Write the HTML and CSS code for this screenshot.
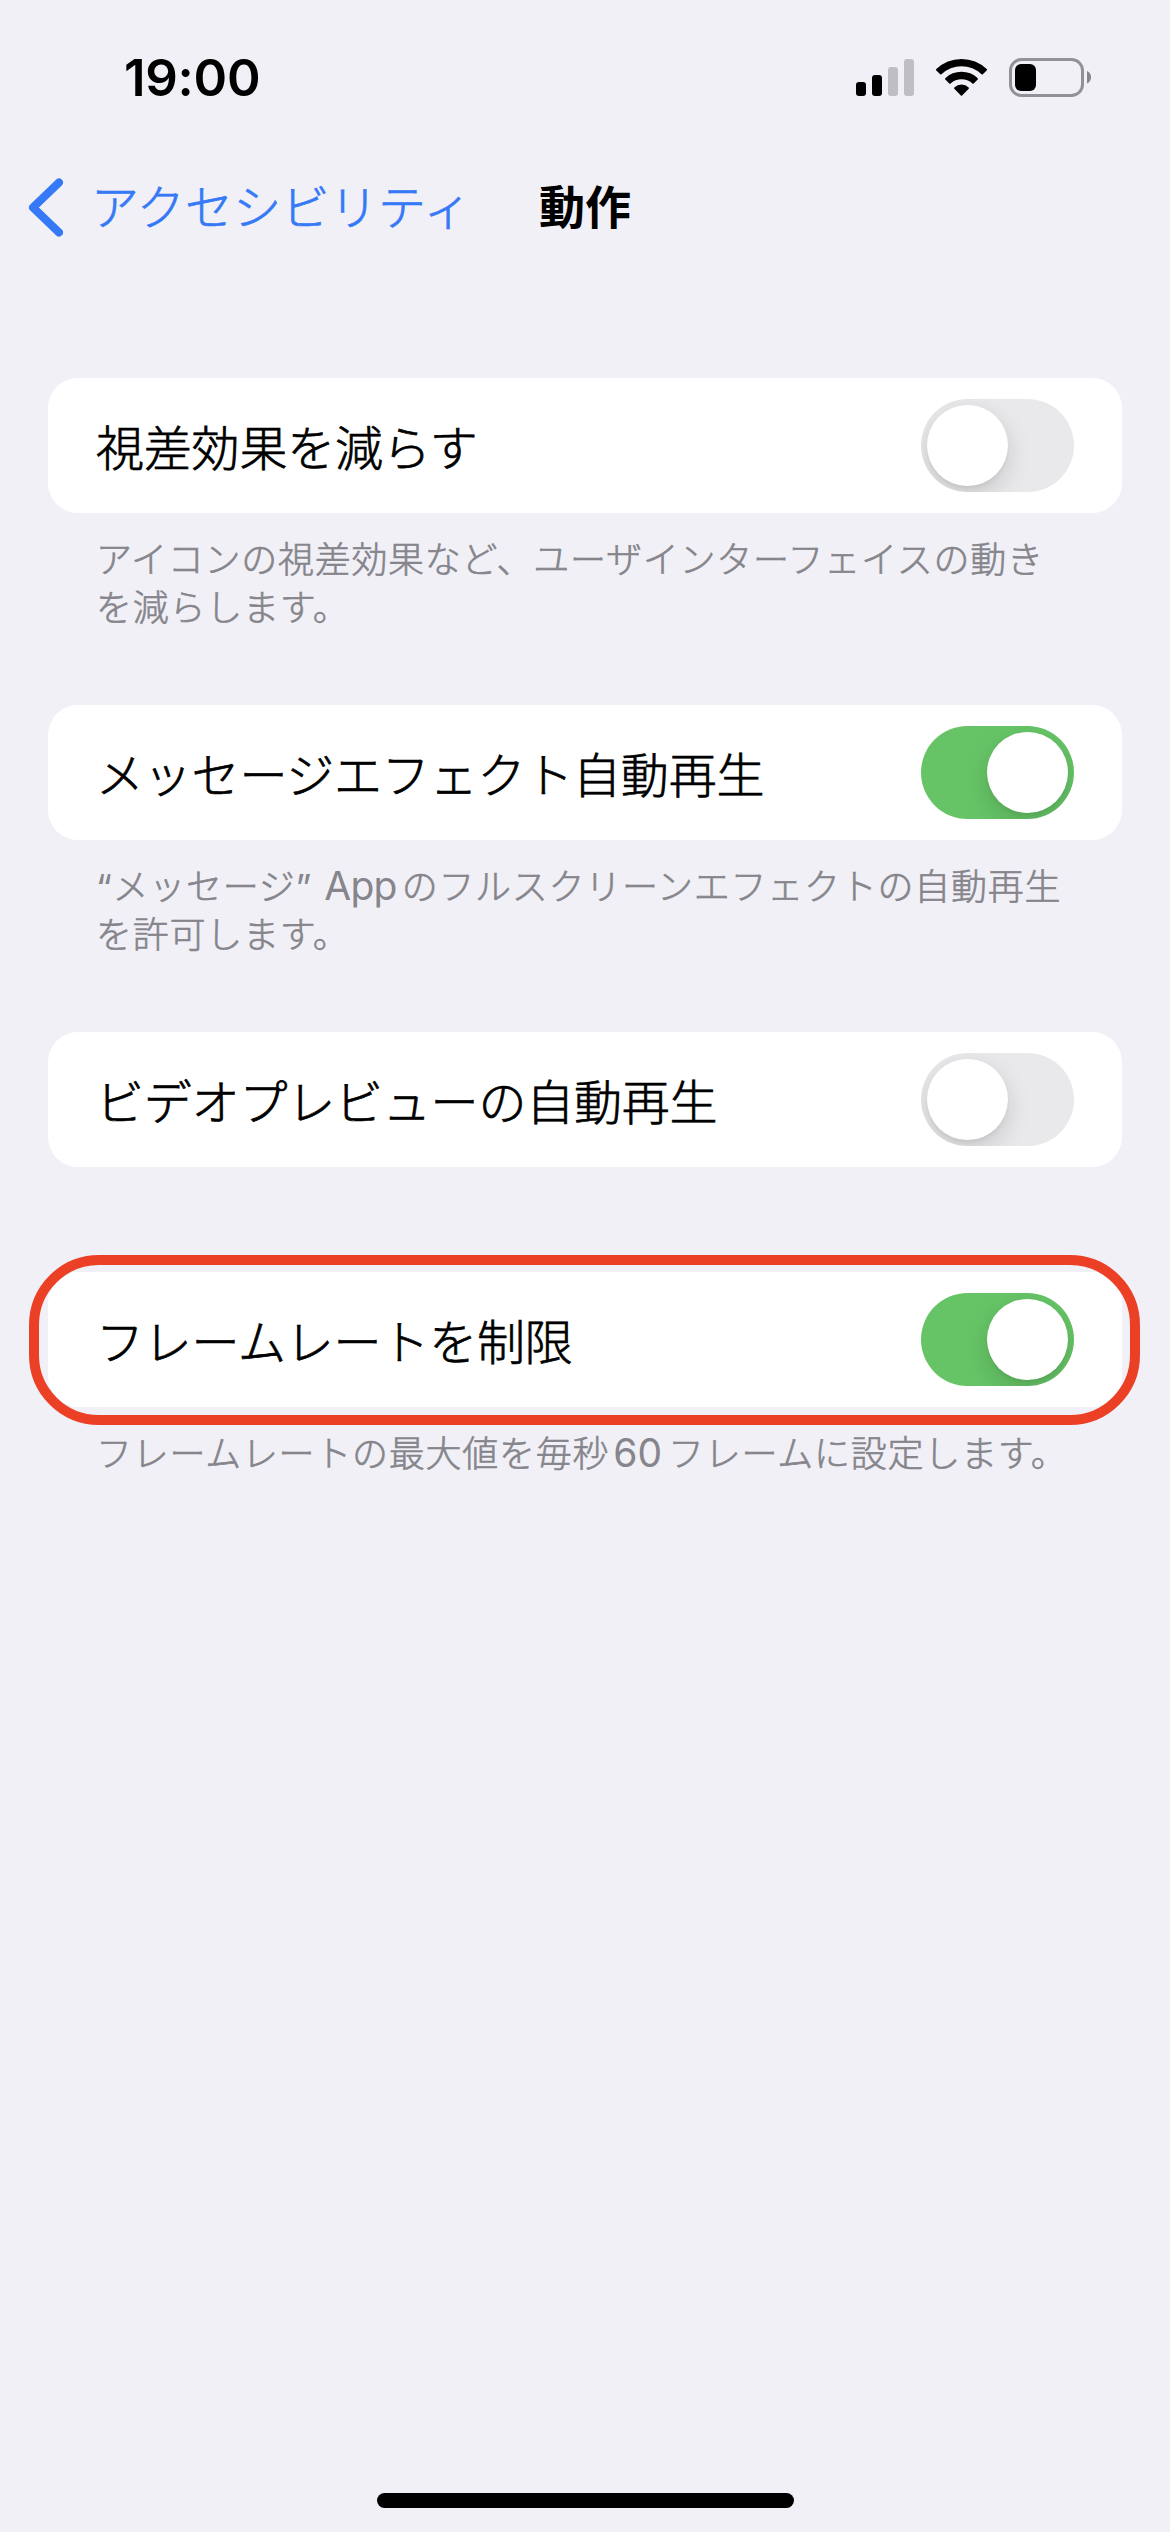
FILE: index.html
```html
<!DOCTYPE html>
<html lang="ja">
<head>
<meta charset="utf-8">
<title>動作</title>
<link rel="stylesheet" href="styles.css">
</head>
<body>
<div class="screen">
  <header class="status">
    <div class="time">19:00</div>
    <div class="indicators">
      <svg class="signal" width="58" height="37" viewBox="0 0 58 37">
        <rect x="0" y="23" width="10" height="14" rx="3"/>
        <rect x="16" y="16" width="10" height="21" rx="3"/>
        <rect class="dim" x="32" y="8" width="10" height="29" rx="3"/>
        <rect class="dim" x="48" y="0" width="10" height="37" rx="3"/>
      </svg>
      <svg class="wifi" width="51" height="37" viewBox="0 0 51 37">
        <path d="M25.500 0 A36.500 36.500 0 0 1 50.700 10.100 Q51.300 10.800 50.700 11.400 L46.800 15.300 Q46.200 15.900 45.500 15.300 A29 29 0 0 0 5.500 15.300 Q4.800 15.900 4.200 15.300 L0.300 11.400 Q-0.300 10.800 0.300 10.100 A36.500 36.500 0 0 1 25.500 0Z"/>
        <path d="M25.500 12.800 A24 24 0 0 1 41.700 19.200 Q42.300 19.900 41.700 20.500 L37.700 24.500 Q37.100 25 36.400 24.500 A16.200 16.200 0 0 0 14.600 24.500 Q13.900 25 13.300 24.500 L9.300 20.500 Q8.700 19.900 9.300 19.200 A24 24 0 0 1 25.500 12.800Z"/>
        <path d="M25.500 25.600 A11 11 0 0 1 32.700 28.400 Q33.300 29 32.700 29.700 L26.100 36.400 Q25.500 37 24.900 36.400 L18.300 29.700 Q17.700 29 18.300 28.400 A11 11 0 0 1 25.500 25.600Z"/>
      </svg>
      <svg class="battery" width="82" height="39" viewBox="0 0 82 39">
        <rect class="shell" x="1.500" y="1.500" width="72" height="36" rx="11"/>
        <rect x="6" y="6" width="21" height="27" rx="6"/>
        <path class="cap" d="M78 13 Q82 14.800 82 19.200 T78 25.500Z"/>
      </svg>
    </div>
  </header>

  <nav class="nav">
    <a class="back">
      <svg width="35" height="59" viewBox="0 0 35 59"><path d="M31 4.500 L5 29.500 L31 54.500"/></svg>
      <span>アクセシビリティ</span>
    </a>
    <h1 class="title">動作</h1>
  </nav>

  <main class="settings">
    <section class="group">
      <div class="card"><span class="label">視差効果を減らす</span><span class="switch"><i class="knob"></i></span></div>
      <p class="note">アイコンの視差効果など、ユーザインターフェイスの動き<br>を減らします。</p>
    </section>
    <section class="group">
      <div class="card"><span class="label">メッセージエフェクト自動再生</span><span class="switch on"><i class="knob"></i></span></div>
      <p class="note"><span class="quote">“</span>メッセージ<span class="quote">”</span><span class="latin app"> App</span>のフルスクリーンエフェクトの自動再生<br>を許可します。</p>
    </section>
    <section class="group">
      <div class="card"><span class="label">ビデオプレビューの自動再生</span><span class="switch"><i class="knob"></i></span></div>
    </section>
    <section class="group">
      <div class="card marked"><span class="label">フレームレートを制限</span><span class="switch on"><i class="knob"></i></span></div>
      <p class="note">フレームレートの最大値を毎秒<span class="latin number">60</span>フレームに設定します。</p>
    </section>
  </main>

  <footer class="home"><div class="home-bar"></div></footer>
</div>
</body>
</html>
```
FILE: styles.css
```css
* { box-sizing: border-box; }

body {
  margin: 0;
  background: #f1f0f6;
  color: #000;
  font-family: "Noto Sans CJK JP", sans-serif;
  font-weight: 300;
}

.screen {
  display: flex;
  flex-direction: column;
  width: 1170px;
  height: 2532px;
  overflow: hidden;
}

.status {
  display: flex;
  justify-content: space-between;
  height: 141px;
  padding: 0 79px 0 124px;
}

.time {
  height: 78px;
  margin-top: 39px;
  font: 600 51px/78px Inter, sans-serif;
  letter-spacing: -0.3px;
}

.indicators { display: flex; align-items: flex-start; padding-top: 58px; }
.signal { margin: 1px 22px 0 0; }
.signal .dim { fill: #bfbec4; }
.wifi { margin: 1px 22px 0 0; }
.battery .shell { fill: none; stroke: #929197; stroke-width: 3; }
.battery .cap { fill: #87868b; }

.nav {
  display: grid;
  grid-template-columns: 1fr auto 1fr;
  align-items: center;
  height: 132px;
  padding: 0 28px;
}

.back {
  display: flex;
  align-items: center;
  gap: 28px;
  color: #3579f7;
  font-size: 48px;
  line-height: 72px;
  letter-spacing: 0.25px;
  white-space: nowrap;
}

.back span { padding-bottom: 7px; -webkit-text-stroke: 0.7px currentColor; }
.back svg { fill: none; stroke: currentColor; stroke-width: 8; stroke-linecap: round; stroke-linejoin: round; }
.title { margin: 0; padding-bottom: 7px; font-size: 46px; line-height: 72px; font-weight: 700; }

.settings { flex: 1; padding: 105px 48px 0; }
.group { min-height: 240px; }
.group:nth-child(-n+2) { height: 327px; }

.card {
  display: flex;
  align-items: center;
  justify-content: space-between;
  height: 135px;
  padding: 0 48px;
  border-radius: 30px;
  background: #fff;
}

.label {
  padding-bottom: 1px;
  font-size: 48px;
  line-height: 72px;
  letter-spacing: -0.2px;
  -webkit-text-stroke: 0.7px currentColor;
}

.marked { position: relative; }
.marked::after {
  content: "";
  position: absolute;
  inset: -17px -18px -18px -19px;
  border: 10px solid #eb4026;
  border-radius: 70px;
}

.switch {
  display: flex;
  width: 153px;
  height: 93px;
  padding: 6px;
  overflow: hidden;
  border-radius: 47px;
  background: #e9e9eb;
}

.switch.on { justify-content: flex-end; background: #66c466; }
.knob { width: 81px; height: 81px; border-radius: 50%; background: #fff; box-shadow: 0 9px 24px rgba(0, 0, 0, .15), 0 3px 3px rgba(0, 0, 0, .04); }

.note {
  margin: 0;
  padding: 20px 48px 0;
  color: #85858b;
  font-size: 36px;
  line-height: 48px;
  letter-spacing: 0.74px;
  white-space: nowrap;
  -webkit-text-stroke: 0.6px currentColor;
}

.latin, .quote {
  font-family: Inter, sans-serif;
  font-weight: 400;
  line-height: 0;
  -webkit-text-stroke: 0;
}

.latin { font-size: 39px; }
.app { margin: 0 5px 0 2px; letter-spacing: -0.8px; }
.number { margin: 0 6px 0 4px; letter-spacing: 0; }

.home { display: flex; justify-content: center; padding: 0 0 24px 1px; }
.home-bar { width: 417px; height: 15px; border-radius: 8px; background: #000; }
```
